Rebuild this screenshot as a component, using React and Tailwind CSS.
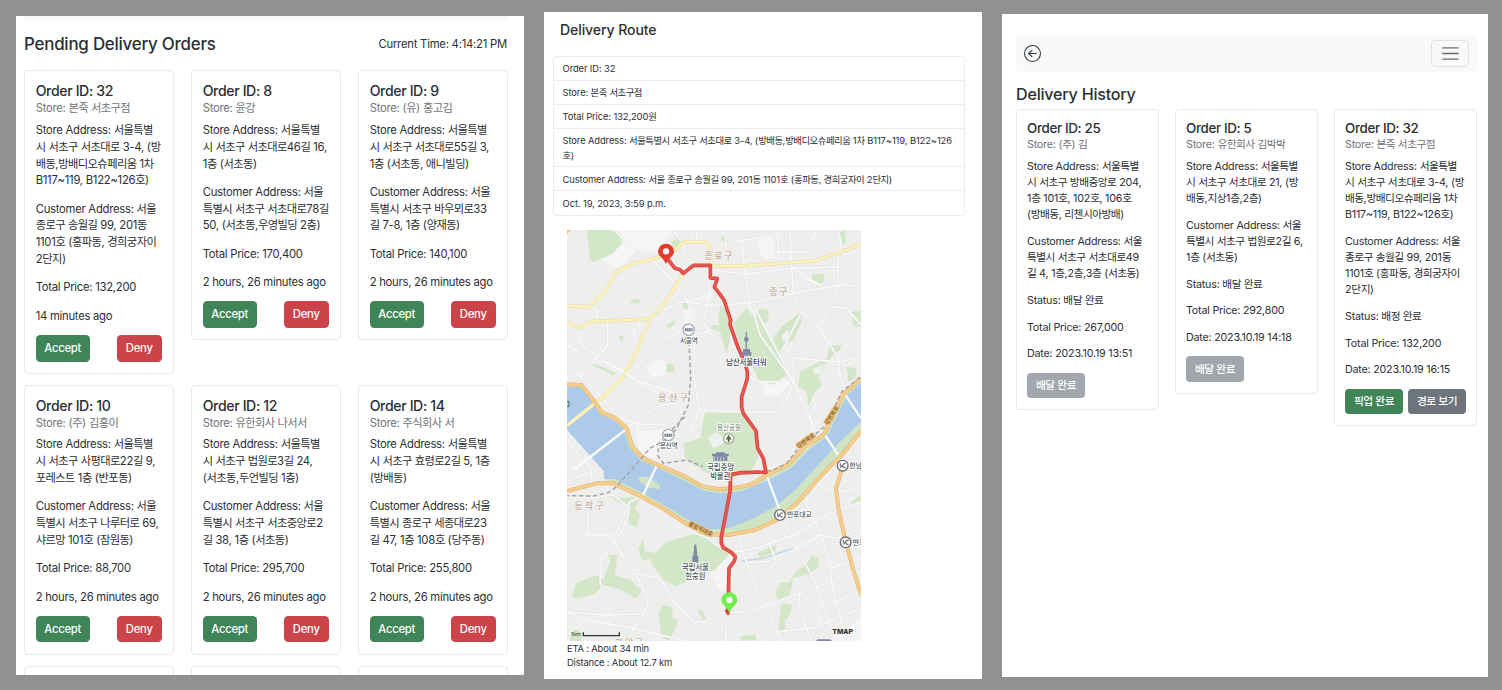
import { Fragment } from "react";
import { BsArrowLeftCircle } from "react-icons/bs";

const HANGUL = /([\u3131-\uD7A3]+)/;

// Tightens the advance of Hangul runs so they sit evenly beside Latin text.
function T({ children }) {
  return children.split(HANGUL).map((part, i) =>
    i % 2 ? (
      <span key={i} className="tracking-[-0.052em]">{part}</span>
    ) : (
      <Fragment key={i}>{part}</Fragment>
    )
  );
}

function Lines({ lines }) {
  return (
    <p className="mb-[1em] leading-[1.5]">
      {lines.map((l) => (
        <span key={l} className="block whitespace-nowrap"><T>{l}</T></span>
      ))}
    </p>
  );
}

const orders = [
  { id: 32, store: "본죽 서초구점", from: ["Store Address: 서울특별", "시 서초구 서초대로 3-4, (방", "배동,방배디오슈페리움 1차", "B117~119, B122~126호)"], to: ["Customer Address: 서울", "종로구 송월길 99, 201동", "1101호 (홍파동, 경희궁자이", "2단지)"], price: "132,200", ago: "14 minutes ago" },
  { id: 8, store: "윤강", from: ["Store Address: 서울특별", "시 서초구 서초대로46길 16,", "1층 (서초동)"], to: ["Customer Address: 서울", "특별시 서초구 서초대로78길", "50, (서초동,우영빌딩 2층)"], price: "170,400", ago: "2 hours, 26 minutes ago" },
  { id: 9, store: "(유) 홍고김", from: ["Store Address: 서울특별", "시 서초구 서초대로55길 3,", "1층 (서초동, 애니빌딩)"], to: ["Customer Address: 서울", "특별시 서초구 바우뫼로33", "길 7-8, 1층 (양재동)"], price: "140,100", ago: "2 hours, 26 minutes ago" },
  { id: 10, store: "(주) 김홍이", from: ["Store Address: 서울특별", "시 서초구 사평대로22길 9,", "포레스트 1층 (반포동)"], to: ["Customer Address: 서울", "특별시 서초구 나루터로 69,", "샤르망 101호 (잠원동)"], price: "88,700", ago: "2 hours, 26 minutes ago" },
  { id: 12, store: "유한회사 나서서", from: ["Store Address: 서울특별", "시 서초구 법원로3길 24,", "(서초동,두언빌딩 1층)"], to: ["Customer Address: 서울", "특별시 서초구 서초중앙로2", "길 38, 1층 (서초동)"], price: "295,700", ago: "2 hours, 26 minutes ago" },
  { id: 14, store: "주식회사 서", from: ["Store Address: 서울특별", "시 서초구 효령로2길 5, 1층", "(방배동)"], to: ["Customer Address: 서울", "특별시 종로구 세종대로23", "길 47, 1층 108호 (당주동)"], price: "255,800", ago: "2 hours, 26 minutes ago" },
];

const history = [
  { id: 25, store: "(주) 김", from: ["Store Address: 서울특별", "시 서초구 방배중앙로 204,", "1층 101호, 102호, 106호", "(방배동, 리첸시아방배)"], to: ["Customer Address: 서울", "특별시 서초구 서초대로49", "길 4, 1층,2층,3층 (서초동)"], status: "배달 완료", price: "267,000", date: "2023.10.19 13:51", actions: ["done"] },
  { id: 5, store: "유한회사 김박박", from: ["Store Address: 서울특별", "시 서초구 서초대로 21, (방", "배동,지상1층,2층)"], to: ["Customer Address: 서울", "특별시 서초구 법원로2길 6,", "1층 (서초동)"], status: "배달 완료", price: "292,800", date: "2023.10.19 14:18", actions: ["done"] },
  { id: 32, store: "본죽 서초구점", from: ["Store Address: 서울특별", "시 서초구 서초대로 3-4, (방", "배동,방배디오슈페리움 1차", "B117~119, B122~126호)"], to: ["Customer Address: 서울", "종로구 송월길 99, 201동", "1101호 (홍파동, 경희궁자이", "2단지)"], status: "배정 완료", price: "132,200", date: "2023.10.19 16:15", actions: ["pickup", "route"] },
];

const actionStyles = {
  done: { label: "배달 완료", cls: "bg-[#a1a7ac]" },
  pickup: { label: "픽업 완료", cls: "bg-[#3f8557]" },
  route: { label: "경로 보기", cls: "bg-[#6d747c]" },
};

function Button({ className, children }) {
  return (
    <button className={`h-[2.38em] rounded-[0.375em] pt-px text-center font-medium whitespace-nowrap text-white ${className}`}>
      <T>{children}</T>
    </button>
  );
}

function Card({ order, className, subtitle, children }) {
  return (
    <article className={`rounded-[0.375em] border border-[#e7e8e8] bg-white pr-[1em] ${className}`}>
      <h5 className="text-[1.25em] leading-[1.2] font-medium tracking-[-0.026em]">Order ID: {order.id}</h5>
      <h6 className={`leading-[1.2] text-[#707377] ${subtitle}`}><T>{`Store: ${order.store}`}</T></h6>
      <Lines lines={order.from} />
      <Lines lines={order.to} />
      {children}
    </article>
  );
}

function PendingOrders() {
  return (
    <section className="mt-4 h-[659px] w-[508px] overflow-hidden bg-white px-2 text-[11.27px] tracking-[-0.023em]">
      <div className="h-[5px] w-[484px] rounded-b bg-[#f8f9fa]" />
      <header className="mt-[14px] flex h-[20px] w-[483px] items-center justify-between">
        <h3 className="text-[16.9px] font-medium tracking-[-0.013em]">Pending Delivery Orders</h3>
        <span className="-mt-0.5 tracking-[-0.02em]">Current Time: 4:14:21 PM</span>
      </header>
      <div className="mt-[15px] grid grid-cols-[150px_150px_150px] items-start gap-x-[17px] gap-y-[11px]">
        {orders.map((o) => (
          <Card key={o.id} order={o} className="pt-[12px] pb-[1em] pl-[10.7px]" subtitle="mt-[2.3px] mb-[6px]">
            <Lines lines={[`Total Price: ${o.price}`]} />
            <Lines lines={[o.ago]} />
            <div className="-mt-[1px] flex justify-between">
              <Button className="w-[54px] bg-[#3f8557]">Accept</Button>
              <Button className="w-[45px] bg-[#cb444a]">Deny</Button>
            </div>
          </Card>
        ))}
        {[0, 1, 2].map((k) => (
          <div key={k} className="h-20 rounded-[0.375em] border border-[#e7e8e8]" />
        ))}
      </div>
    </section>
  );
}

const whiteRoads = [
  "M21 300L52 308L58 345L70 365L130 405L200 450L240 470L350 505",
  "M21 360L60 385L180 430L260 485L350 540",
  "M21 410L62 455L143 360L143 290", "M85 245L112 258V288", "M62 455L130 520L170 575L232 597L320 600L350 650",
  "M195 447L240 415L300 350L360 318L385 300", "M240 285L236 308L222 312V350H238",
  "M160 15L200 50L270 95L330 160L375 215L395 260L405 330L400 450L418 555L390 620L340 640",
  "M300 258L350 235L400 225L470 205", "M232 597L240 650L265 700", "M232 597L290 545L350 530", "M418 555L520 560L660 560L690 500L700 470",
  "M375 230L440 240L500 240L590 232L720 200L840 180L903 183", "M372 50V105", "M340 15L365 50", "M410 15V50",
  "M435 133L560 147L700 130L835 127", "M440 75L450 205L430 290L445 320", "M400 330L440 320L470 335",
  "M495 15L502 120", "M520 50L650 30L660 15", "M545 40L555 145L570 232", "M655 30V130", "M655 80H740L760 110", "M690 15L695 120L700 215L725 260L675 360L700 400V470",
  "M700 130L780 180L735 160", "M735 70L760 40L770 15", "M835 60V180L780 312L835 400L840 450L860 505", "M812 245L860 250L903 300",
  "M725 260L780 312", "M585 250L700 470L750 580L785 640", "M560 235L580 260L600 330L700 470", "M510 330L560 450L600 470L660 470L700 465",
  "M700 400L840 410L903 395", "M840 440L780 500L750 580L760 620", "M835 15L850 90L903 75",
  "M21 645L85 720L95 740V775", "M21 770L95 740", "M21 815L90 820L160 810L210 850L185 920L125 1000L120 1070L150 1150L148 1210",
  "M85 820V935L125 1000", "M78 930H150L220 1040L250 1090L265 1140L215 1220", "M225 1045L300 1060L350 1140L400 1190L435 1190L480 1165L560 1160L620 1140L720 1105L870 1048L903 1040",
  "M21 1160L130 1170L240 1168", "M21 1160L80 1185L200 1205L300 1230L380 1248", "M21 1230L70 1190", "M245 815L210 830L160 945",
  "M300 855L350 905L435 935L480 967", "M480 967L540 980L600 965L700 930L800 870L903 830", "M535 930L545 975L610 1140L655 1225L665 1248",
  "M545 975L560 1012L620 1010L700 975L780 930L830 940L903 910", "M600 1248L655 1220L770 1205L903 1150", "M665 870L705 960L760 1060L830 1248", "M720 1105L715 1150L755 1248",
  "M770 1150L903 1100", "M770 1150L790 1205", "M785 930L810 1020L820 1100L860 1248", "M625 950L650 1010L610 1050", "M735 830L780 920",
  "M735 830L800 750L840 700", "M780 780L830 805L903 785", "M500 1165L498 1248", "M860 960L903 935", "M810 1030L903 1000",
];

const yellowRoads = [
  "M21 243L88 245L135 200L168 142L220 115L285 100L340 80L372 50L440 52L452 66V123H540L765 108L903 58",
  "M21 292L55 308L95 290L265 282L305 250L370 145",
  "M21 602L130 515L185 462L230 380L268 285",
];

const trunkRoads = [
  "M21 478L65 480L100 525L125 562L165 578L200 610L217 665L250 700L290 718L370 752L430 785L480 793L535 787L575 778L620 750L685 718L735 665L790 630L820 570L850 508L903 460",
  "M21 798L110 775L160 775L245 815L300 845L380 897L440 928L505 930L585 915L650 885L710 835L785 750L850 685L903 618",
  "M850 720L828 790L835 850L857 950L880 1035L903 1110",
];

const greens = [
  "M80 15L90 100L98 112L155 88L187 55L180 25L150 15Z", "M335 48L360 40L370 55L350 68L335 65Z", "M210 228L235 220L243 235L215 235Z", "M365 228L378 226L387 250L372 255Z",
  "M320 300L345 285L345 300L325 310Z", "M175 338L190 330V350Z", "M320 418L340 415L343 442L320 440Z", "M92 412L170 445L160 450L105 425Z",
  "M480 240L500 255L515 310L500 390L480 320L450 310L455 300L475 300Z",
  "M520 295L560 250L585 280L600 250L625 255L625 285L610 300L650 370L680 450L640 480L595 465L580 430L545 380Z",
  "M640 340L665 305L720 262L725 290L700 345L670 360L655 385L640 370Z", "M720 440L760 420L800 400L810 360L845 360L840 375L810 400L790 425L775 455L785 480L765 500L745 545L740 500L715 485Z",
  "M755 150L790 145L795 165L780 180L758 170Z", "M840 20L855 15L857 55L845 60Z", "M875 260L903 258V305L880 305Z", "M860 425L890 430L885 460L865 470Z",
  "M480 45L495 28L505 50Z", "M435 563H545L588 625L595 700L570 745L500 755L440 745L375 700L370 655L420 640Z",
  "M270 1010L285 985L315 955L355 940L425 922L480 965L510 985L465 1035L400 1060L350 1085L310 1065Z",
  "M35 1115L48 1075L110 1050L130 1065L150 1010L145 990L172 990L165 1050L210 1065L245 1095L230 1120L170 1090L130 1080L100 1110L50 1120Z",
  "M235 970L250 945L255 980L280 980V1000L245 1008Z", "M295 1160L310 1140L335 1145L340 1180L355 1185L345 1215L325 1248L305 1235Z",
  "M155 815L185 820L215 815L240 820L225 850L240 870L230 910L205 895L210 850L180 835Z",
  "M645 1105L660 1075L690 1070L710 1035L740 1020L755 990L775 1000V1025L750 1045L700 1060L690 1110L655 1125Z",
  "M665 1135L695 1140L690 1170L675 1185V1225L655 1215Z", "M593 985L620 970L650 960L645 980L600 1000Z", "M540 1235L585 1228L590 1245L545 1248Z",
  "M30 1225L45 1210L65 1225V1248H30Z", "M410 1155L425 1155L440 1185L430 1185Z", "M870 835L903 810L903 830L880 840Z",
];

const halo = "[paint-order:stroke] stroke-white stroke-[5]";

function Station({ x, y }) {
  return (
    <g>
      <circle cx={x} cy={y} r="17" fill="#fff" stroke="#a9abae" strokeWidth="4" />
      <rect x={x - 12} y={y - 4} width="24" height="9" rx="3" fill="#747e8d" />
      <path d={`M${x - 7} ${y}h3M${x - 1} ${y}h3M${x + 5} ${y}h3`} stroke="#eef0f3" strokeWidth="3" />
    </g>
  );
}

function Junction({ x, y }) {
  return (
    <g fill="none" stroke="#6a6d70">
      <circle cx={x} cy={y} r="16" fill="#fff" strokeWidth="4" />
      <path d={`M${x - 7} ${y - 7}v9M${x + 9} ${y - 6}h-5l-5 6l5 6h5M${x - 7} ${y + 6}l6 -6`} strokeWidth="3.5" />
    </g>
  );
}

function Pin({ x, y, fill }) {
  return (
    <g>
      <path d={`M${x} ${y}c-6 -20 -24 -23 -24 -39a24 23 0 0 1 48 0c0 16 -18 19 -24 39Z`} fill={fill} />
      <circle cx={x} cy={y - 39} r="9.5" fill="#fff" />
    </g>
  );
}

const route = "M325 105L345 130L360 134L370 145L400 121H451V159L472 161L463 186L480 208L492 225L503 258L512 285L510 298L535 370L554 412L562 440L562 460L553 490L545 515V548L550 565L575 600L588 618L590 640L593 670L610 700L618 742L590 741L560 743L545 743L512 749L510 800L495 880L484 935L484 955L490 968L515 983L526 995L523 1008L507 1030L504 1165";

function RouteMap() {
  return (
    <svg viewBox="21 15 882 1233" className="block h-[411px] w-[294px] font-[Inter,'Noto_Sans_CJK_KR',sans-serif]" aria-label="Delivery route">
      <rect x="21" y="15" width="882" height="1233" fill="#eeeeed" />
      <g fill="#f5f5f6">
        <path d="M175 15H340L300 80L230 75L200 110L165 130L120 100L187 60Z" />
        <path d="M255 430L290 405L320 410L315 450L280 460Z" />
        <path d="M370 245L405 260L400 330L375 320Z" />
        <path d="M590 50L640 30L645 100L610 105Z" />
        <path d="M610 480L660 450L690 475L650 515L610 510Z" />
        <path d="M450 1040L520 985V1070L480 1100Z" />
        <path d="M225 620L330 610L290 700L240 690Z" />
        <path d="M820 1230L903 1180V1248H800Z" />
      </g>
      <g fill="#d3e7c8">{greens.map((d) => <path key={d} d={d} />)}</g>
      <g fill="#eff1ee">
        <path d="M665 330L685 315L690 340L670 350Z" />
        <path d="M760 430L790 418L780 445L762 450Z" />
        <path d="M445 640L470 620L500 650L460 670Z" />
      </g>
      <path d="M545 1008L610 1000L700 970" fill="none" stroke="#bfd4e6" strokeWidth="4" />
      <path d="M21 598L135 720V765L160 775L245 815L380 897L440 928L505 930L585 915L650 885L710 835L785 750L903 618V460L850 508L790 630L685 718L620 750L535 787L480 793L430 785L290 718L217 665L200 610L125 562L65 480H21Z" fill="#cfe4c4" />
      <path d="M21 485L62 487L96 530L120 568L162 586L192 615L208 668L245 708L288 727L370 765L430 797L480 805L540 800L625 765L695 728L745 675L800 635L832 570L860 512L903 472V590L840 650L770 725L700 800L645 845L580 880L510 908L440 915L380 882L300 833L240 800L165 762L132 762L131 738L21 615Z" fill="#adcbe9" />
      <path d="M233 757L260 755L300 780L300 792L265 788L240 770Z" fill="#cfe4c4" />
      <path d="M520 910L570 885L600 875L580 895L530 915Z" fill="#cfe4c4" />
      <g fill="none" stroke="#dfe0e0" strokeWidth="6.5" strokeLinejoin="round">{whiteRoads.map((d) => <path key={d} d={d} />)}</g>
      <g fill="none" stroke="#fafafa" strokeWidth="4.5" strokeLinejoin="round">{whiteRoads.map((d) => <path key={d} d={d} />)}</g>
      <path d="M40 735L215 600M245 820L295 712M620 752L665 870M785 615L835 690M855 508L903 580" fill="none" stroke="#f7f9fb" strokeWidth="7" />
      <g fill="none" stroke="#e3dcb4" strokeWidth="11" strokeLinejoin="round">{yellowRoads.map((d) => <path key={d} d={d} />)}</g>
      <g fill="none" stroke="#fbf1b9" strokeWidth="8" strokeLinejoin="round">{yellowRoads.map((d) => <path key={d} d={d} />)}</g>
      <g fill="none" stroke="#ddb275" strokeWidth="12" strokeLinejoin="round">{trunkRoads.map((d) => <path key={d} d={d} />)}</g>
      <g fill="none" stroke="#f6cd8b" strokeWidth="9" strokeLinejoin="round">{trunkRoads.map((d) => <path key={d} d={d} />)}</g>
      <path d="M21 15H34L21 28Z" fill="#f0c47f" />
      <path d="M21 530H27V545H21" fill="none" stroke="#56616f" strokeWidth="3" />
      <g fill="none" stroke="#a5a6a8" strokeWidth="4.5" strokeDasharray="13 8">
        <path d="M387 350L392 460L385 540L350 610L325 640L270 670L170 785L145 803L100 813L21 812" />
        <path d="M375 575L300 650L292 690L310 715L380 705L430 725" />
        <path d="M600 745L640 735L680 715L715 670L800 600L845 500L903 455" />
      </g>

      <g fill="none" strokeLinejoin="round" strokeLinecap="round">
        <path d={route} stroke="#d8413c" strokeWidth="11" />
        <path d={route} stroke="#ea5751" strokeWidth="6" />
      </g>
      <circle cx="501" cy="1158" r="6" fill="#dc3b30" />
      <Pin x={318} y={118} fill="#e23c28" />
      <Pin x={508} y={1164} fill="#70f04a" />

      <g fill="#bba68f" fontSize="27" textAnchor="middle" className="[paint-order:stroke] stroke-[#f4f2ef] stroke-[4]">
        <text x="475" y="102" textLength="84">종 로 구</text>
        <text x="655" y="211" textLength="54">중 구</text>
        <text x="339" y="527" textLength="88">용 산 구</text>
        <text x="87" y="853" textLength="88">동 작 구</text>
        <text x="207" y="1262" textLength="84">관 악 구</text>
      </g>
      <Station x={386} y={314} />
      <Station x={325} y={630} />
      <Junction x={660} y={870} />
      <Junction x={848} y={722} />
      <Junction x={857} y={952} />

      <g fill="#8089a5">
        <path d="M557 322h4v13a8 8 0 0 1 0 15v22h9v9h4v11h-29v-11h4v-9h8v-22a8 8 0 0 1 0 -15Z" />
        <path d="M403 960l3 -3 3 3 3 33h3v20h-18v-20h3Z" />
        <path d="M456 686h12v-4h26v4h12v7h-4v15h-42v-15h-4Z" />
        <path d="M768 1248l5 -5h38l5 5Z" />
      </g>
      <path d="M464 695v14M473 695v14M482 695v14M491 695v14" stroke="#c5cbdc" strokeWidth="3" />
      <circle cx="506" cy="641" r="15" fill="#fff" stroke="#a3a99b" strokeWidth="4" />
      <path d="M506 630l8 13h-6v8h-4v-8h-6Z" fill="#527447" stroke="#527447" strokeWidth="1.5" />

      <g fill="#4e5661" fontSize="23" fontWeight="500" textAnchor="middle" className={halo}>
        <text x="387" y="353" fontSize="21" textLength="54">서울역</text>
        <text x="326" y="669" fontSize="21" textLength="54">용산역</text>
        <text x="559" y="419" textLength="122" fill="#3d434c">남산서울타워</text>
        <text x="507" y="615" fontSize="20" fontWeight="400" textLength="72" fill="#6d7d68">용산공원</text>
        <text x="482" y="734" textLength="82">국립중앙</text>
        <text x="481" y="762" textLength="61">박물관</text>
        <text x="406" y="1035" textLength="82">국립서울</text>
        <text x="406" y="1063" textLength="61">현충원</text>
        <text x="718" y="877" fontSize="21" textLength="74">반포대교</text>
        <text x="868" y="729" fontSize="21" textAnchor="start">한남</text>
        <text x="878" y="960" fontSize="21" textAnchor="start">반포</text>
      </g>
      <g fill="#81601f" fontSize="17" fontWeight="500" textAnchor="middle" className="[paint-order:stroke] stroke-[#e5bd7c] stroke-[5]">
        <text x="422" y="918" transform="rotate(27 422 912)" textLength="78">올림픽대로</text>
        <text x="738" y="653" transform="rotate(-36 738 648)" textLength="62">강변북로</text>
        <text x="815" y="577" transform="rotate(-57 815 571)" textLength="62">강변북로</text>
      </g>

      <text x="33" y="1234" fontSize="16" fill="#333">1km</text>
      <path d="M70 1222V1232H178V1222" fill="none" stroke="#333" strokeWidth="4" />
      <text x="817" y="1226" fontSize="20" fontWeight="800" textLength="62" lengthAdjust="spacingAndGlyphs" fill="#333">TMAP</text>
    </svg>
  );
}

const details = [
  ["Order ID: 32"],
  ["Store: 본죽 서초구점"],
  ["Total Price: 132,200원"],
  ["Store Address: 서울특별시 서초구 서초대로 3-4, (방배동,방배디오슈페리움 1차 B117~119, B122~126", "호)"],
  ["Customer Address: 서울 종로구 송월길 99, 201동 1101호 (홍파동, 경희궁자이 2단지)"],
  ["Oct. 19, 2023, 3:59 p.m."],
];

function DeliveryRoute() {
  return (
    <section className="mt-3 h-[667px] w-[438px] overflow-hidden bg-white pl-[9px] text-[9.4px] leading-[14.1px] tracking-[-0.012em]">
      <h3 className="mt-[8px] ml-[7px] text-[14.1px] leading-[20px] font-medium tracking-[-0.008em]">Delivery Route</h3>
      <ul className="mt-[16px] w-[412px] divide-y divide-[#ebecec] rounded border border-[#ebecec]">
        {details.map((lines) => (
          <li key={lines[0]} className="pt-[5.2px] pb-[3.8px] pl-[8.6px]">
            {lines.map((l) => (
              <span key={l} className="block whitespace-nowrap"><T>{l}</T></span>
            ))}
          </li>
        ))}
      </ul>
      <div className="mt-[14px] ml-[14px]">
        <RouteMap />
        <p className="pt-px tracking-[-0.018em]">ETA : About 34 min</p>
        <p className="tracking-[-0.018em]">Distance : About 12.7 km</p>
      </div>
    </section>
  );
}

function DeliveryHistory() {
  return (
    <section className="mt-[14px] h-[663px] w-[486px] overflow-hidden bg-white px-[14px] text-[10.72px] tracking-[-0.02em]">
      <nav className="mt-[21px] flex h-[37px] w-[461px] items-center justify-between rounded bg-[#f8f9fa] pr-2 pl-2">
        <BsArrowLeftCircle className="size-[17px] text-[#33373b]" />
        <button className="flex h-[27px] w-[38px] items-center justify-center rounded border border-[#e2e3e4]" aria-label="Menu">
          <svg viewBox="0 0 30 30" className="size-[21px]" fill="none" stroke="#6b6d70" strokeWidth="2" strokeLinecap="round">
            <path d="M4 7h22M4 15h22M4 23h22" />
          </svg>
        </button>
      </nav>
      <h3 className="mt-[12px] text-[16.08px] leading-[20px] font-medium tracking-[-0.013em]">Delivery History</h3>
      <div className="mt-[5px] grid grid-cols-[143px_143px_143px] items-start gap-x-[16px]">
        {history.map((o) => (
          <Card key={o.id} order={o} className="pt-[10px] pb-[1em] pl-[10px]" subtitle="mt-[3px] mb-[6.8px]">
            <Lines lines={[`Status: ${o.status}`]} />
            <Lines lines={[`Total Price: ${o.price}`]} />
            <Lines lines={[`Date: ${o.date}`]} />
            <div className="-mt-[0.6px] flex gap-[5px]">
              {o.actions.map((a) => (
                <Button key={a} className={`w-[58px] shrink-0 ${actionStyles[a].cls}`}>{actionStyles[a].label}</Button>
              ))}
            </div>
          </Card>
        ))}
      </div>
    </section>
  );
}

export default function App() {
  return (
    <main className="flex h-[690px] w-[1502px] items-start gap-5 overflow-hidden bg-[#919191] pl-4 font-[Inter,'Noto_Sans_CJK_KR',sans-serif] text-[#2b2f33]">
      <PendingOrders />
      <DeliveryRoute />
      <DeliveryHistory />
    </main>
  );
}
